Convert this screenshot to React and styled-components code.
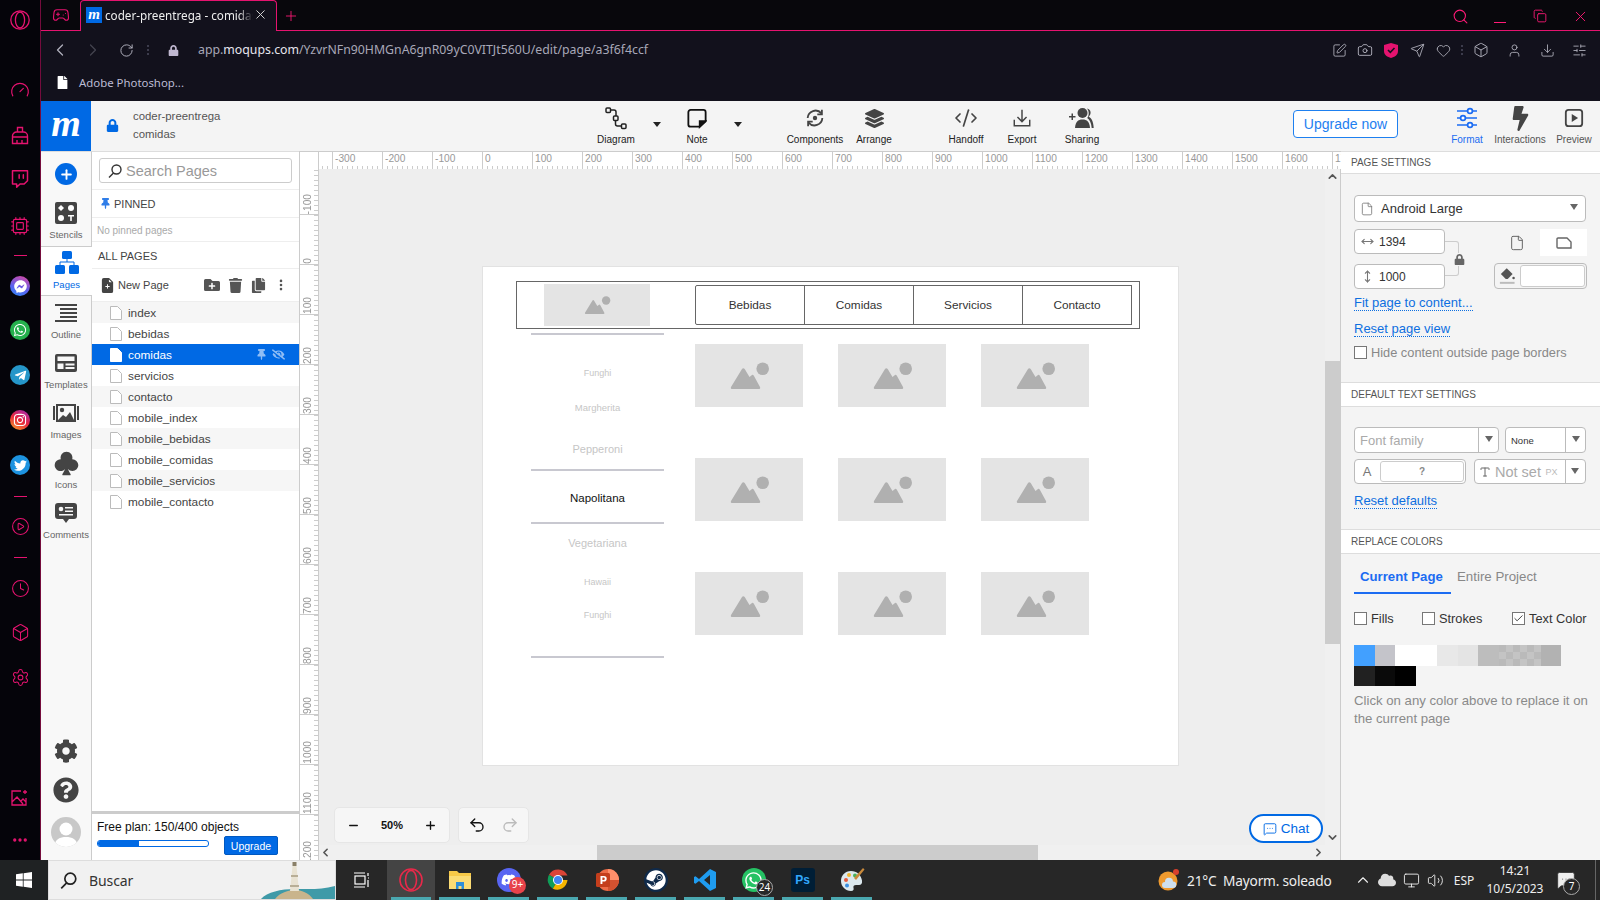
import React from "react";
import styled, { createGlobalStyle } from "styled-components";
import {
  Gauge, Twitch, Cpu, CirclePlay, Clock, Box, Settings, Ellipsis, Gamepad2, Search, Copy, X, Plus, Minus,
  ChevronLeft, ChevronRight, RotateCw, SquarePen, Camera, Send, Heart, User, Download, SlidersHorizontal, Check,
  ChevronUp, ChevronDown, Undo2, Redo2, Volume2, MessageSquareMore, MoveHorizontal, MoveVertical, File as FileIcon,
  Type, CodeXml, Monitor,
} from "lucide-react";
import {
  FaWhatsapp, FaTelegramPlane, FaInstagram, FaTwitter, FaFacebookMessenger, FaLock, FaLayerGroup, FaBolt,
  FaCog, FaQuestionCircle, FaThumbtack, FaTrash, FaCopy, FaFolderPlus, FaFile, FaEyeSlash, FaDiscord, FaSteam, FaCloud,
} from "react-icons/fa";
import { BsSuitClubFill, BsFileEarmarkPlusFill } from "react-icons/bs";

const Global = createGlobalStyle`
  html, body { margin: 0; padding: 0; width: 1600px; height: 900px; overflow: hidden; background: #05040a; }
  * { box-sizing: border-box; }
  body { font-family: "Liberation Sans", Arial, sans-serif; }
`;

const PINK = "#e5136f";
const BLUE = "#0069e4";

/* ---------- page shell ---------- */
const Screen = styled.div`width: 1600px; height: 900px; display: flex; flex-direction: column; overflow: hidden;`;
const Desktop = styled.div`height: 860px; display: flex;`;
const Main = styled.div`flex: 1; min-width: 0; display: flex; flex-direction: column; border-left: 1px solid ${PINK}80;`;

/* ---------- opera sidebar ---------- */
const OperaBar = styled.div`width: 40px; background: #05040a; display: flex; flex-direction: column; align-items: center; color: ${PINK};`;
const OperaSlot = styled.div`height: 24px; width: 40px; flex: none; margin-top: ${p => p.$mt}px; display: flex; align-items: center; justify-content: center;`;
const OperaDash = styled.span`width: 13px; height: 1px; background: ${PINK};`;
const AppDot = styled.span`width: 20px; height: 20px; border-radius: 50%; color: #fff; display: flex; align-items: center; justify-content: center; background: ${p => p.$bg};`;

const OperaLogo = ({ size = 20, color = PINK }) => (
  <svg width={size} height={size} viewBox="0 0 20 20" fill="none" stroke={color} strokeWidth="1.3">
    <circle cx="10" cy="10" r="9.2" /><ellipse cx="10" cy="10" rx="4.6" ry="8" />
  </svg>
);
const BrushIcon = () => (
  <svg width="20" height="20" viewBox="0 0 20 20" fill="none" stroke={PINK} strokeWidth="1.4">
    <path d="M7.5 7V2.5h5V7M2.500 18.500V11a4 4 0 0 1 4-4h7a4 4 0 0 1 4 4v7.500zM2.500 12h15M7 18.500V15M12 18.500V15" />
  </svg>
);
const PhotoSpark = () => (
  <svg width="20" height="20" viewBox="0 0 20 20" fill="none" stroke={PINK} strokeWidth="1.3">
    <path d="M11 3H2v14h14V10M2 14l5-5 6 7M11 13l2-2 3 3M15 2v4M13 4h4" />
  </svg>
);

const sideItems = [
  { y: 20, el: <OperaLogo /> },
  { y: 90, el: <Gauge size={20} strokeWidth={1.4} /> },
  { y: 135, el: <BrushIcon /> },
  { y: 179, el: <Twitch size={20} strokeWidth={1.8} /> },
  { y: 226, el: <Cpu size={20} strokeWidth={1.4} /> },
  { y: 255, el: <OperaDash /> },
  { y: 286, el: <AppDot $bg="linear-gradient(200deg,#e0479f,#5a60f0 60%,#2f8cf5)"><FaFacebookMessenger size={13} /></AppDot> },
  { y: 330, el: <AppDot $bg="#25b04d"><FaWhatsapp size={14} /></AppDot> },
  { y: 375, el: <AppDot $bg="#2596c9"><FaTelegramPlane size={13} /></AppDot> },
  { y: 420, el: <AppDot $bg="linear-gradient(30deg,#f9a825,#e8263f 50%,#9b2bc2)"><FaInstagram size={14} /></AppDot> },
  { y: 465, el: <AppDot $bg="#1d93e0"><FaTwitter size={13} /></AppDot> },
  { y: 496, el: <OperaDash /> },
  { y: 526, el: <CirclePlay size={19} strokeWidth={1.3} /> },
  { y: 557, el: <OperaDash /> },
  { y: 588, el: <Clock size={19} strokeWidth={1.3} /> },
  { y: 632, el: <Box size={19} strokeWidth={1.3} /> },
  { y: 677, el: <Settings size={19} strokeWidth={1.3} /> },
  { y: 798, el: <PhotoSpark /> },
  { y: 840, el: <Ellipsis size={18} strokeWidth={2.4} /> },
];

/* ---------- browser chrome ---------- */
const TabBar = styled.div`height: 31px; flex: none; background: #08070c; display: flex; align-items: flex-end; border-bottom: 1px solid ${PINK}; position: relative; color: #ff1a77;`;
const TabSide = styled.div`width: 39px; height: 30px; display: flex; align-items: center; justify-content: center; color: ${PINK};`;
const ActiveTab = styled.div`width: 197px; height: 31px; margin-bottom: -1px; background: #12111c; border: 1px solid ${PINK}; border-bottom: none; border-radius: 4px 4px 0 0; display: flex; align-items: center; padding: 0 8px 3px 5px; color: #eee;`;
const Favicon = styled.span`width: 16px; height: 16px; background: ${BLUE}; color: #fff; font: italic bold 15px/14px "Liberation Serif", serif; text-align: center; flex: none;`;
const TabTitle = styled.span`font: 11.7px/16px "Noto Sans", sans-serif; margin-left: 3px; width: 148px; white-space: nowrap; overflow: hidden; mask-image: linear-gradient(90deg, #000 90%, transparent);`;
const TabClose = styled.span`margin-left: auto; display: flex; color: #ddd;`;
const NewTab = styled.span`margin-left: 6px; height: 28px; display: flex; align-items: center;`;
const WinControls = styled.div`margin-left: auto; display: flex; height: 28px;`;
const WinBtn = styled.span`width: 40px; display: flex; align-items: center; justify-content: center;`;
const MinLine = styled.span`width: 12px; height: 1px; background: #ff1a77; margin-top: 12px;`;

const AddressBar = styled.div`height: 35px; flex: none; background: #12111c; display: flex; align-items: center; padding-top: 3px; color: #b0b0bc;`;
const NavBtn = styled.span`width: ${p => p.$w}px; display: flex; align-items: center; justify-content: center; color: ${p => p.$c || "inherit"}; flex: none;`;
const Url = styled.div`font: 12.3px/18px "Noto Sans", sans-serif; color: #a8a8b8; margin-left: 3px; white-space: nowrap;`;
const UrlHost = styled.span`color: #e6e6ee;`;
const AddressTools = styled.div`margin-left: auto; display: flex; align-items: center; padding-right: 2px;`;
const Dots = styled.span`width: 2px; height: 10px; border-left: 2px dotted #3c3c4c;`;
const BookmarkBar = styled.div`height: 35px; flex: none; background: #12111c; display: flex; align-items: center; padding: 0 0 2px 15px; color: #fff; gap: 10px;`;
const BookmarkLabel = styled.span`font: 11.4px "Noto Sans", sans-serif; color: #bcbcd4;`;

/* ---------- app header ---------- */
const AppShell = styled.div`flex: 1; min-height: 0; display: flex; flex-direction: column; background: #f4f4f4;`;
const Header = styled.header`height: 50px; flex: none; display: flex; background: #f4f4f4;`;
const Logo = styled.div`width: 50px; background: ${BLUE}; color: #fff; font: italic bold 38px/44px "Liberation Serif", serif; text-align: center; flex: none;`;
const Project = styled.div`width: 500px; flex: none; display: flex; align-items: center; padding: 0 0 2px 15px; gap: 14px; color: ${BLUE};`;
const ProjectText = styled.div`font-size: 11.4px; line-height: 18px; color: #555;`;
const ToolButton = styled.div`width: ${p => p.$w}px; margin-left: ${p => p.$ml || 0}px; flex: none; display: flex; flex-direction: column; align-items: center; padding-top: 4px; color: ${p => p.$active ? "#1b6cf2" : "#333"};`;
const ToolIcon = styled.div`height: 26px; display: flex; align-items: center; justify-content: center; color: ${p => p.$active ? "#1b6cf2" : "#333"};`;
const ToolLabel = styled.div`font-size: 10px; line-height: 12px; margin-top: 3px; white-space: nowrap; color: ${p => p.$active ? "#1b6cf2" : p.$muted ? "#555" : "#222"};`;
const ToolCaret = styled.div`width: 16px; height: 5px; margin: 21px 0 0 ${p => p.$ml}px; flex: none; display: flex; justify-content: center;
  &::after { content: ""; border: 4px solid transparent; border-top: 5px solid #222; border-bottom: none; }`;
const UpgradeNow = styled.button`width: 105px; height: 28px; margin: 9px 0 0 186px; flex: none; border: 1px solid #1e80f0; border-radius: 4px; background: #fff; color: #1e80f0; font: 14px "Liberation Sans", sans-serif; padding: 0;`;

const DiagramIcon = () => (
  <svg width="22" height="24" viewBox="0 0 22 24" fill="none" stroke="#222" strokeWidth="1.5">
    <rect x="1" y="2" width="4.500" height="4.500" rx="1" /><rect x="8.500" y="10" width="4.500" height="4.500" rx="1" /><rect x="16.500" y="18" width="4.500" height="4.500" rx="1" />
    <path d="M5.500 4H9q2 0 2 2v4M10.500 14.500V18q0 2 2 2h4" />
  </svg>
);
const NoteIcon = () => (
  <svg width="20" height="21" viewBox="0 0 22 22" fill="none" stroke="#111" strokeWidth="2">
    <path d="M14 20H4a2.500 2.500 0 0 1-2.500-2.500V4A2.500 2.500 0 0 1 4 1.500h14A2.500 2.500 0 0 1 20.500 4v10z" />
    <path d="M20 14h-6v6z" fill="#111" />
  </svg>
);
const ComponentsIcon = () => (
  <svg width="22" height="22" viewBox="0 0 24 24" fill="none" stroke="#444" strokeWidth="2">
    <path d="M4 12a8.500 8.500 0 0 1 15-5M20 12a8.500 8.500 0 0 1-15 5" /><path d="M19.500 3v5h-5M4.500 21v-5h5" />
    <circle cx="12" cy="12" r="2.400" fill="#444" stroke="none" />
  </svg>
);
const ExportIcon = () => (
  <svg width="20" height="20" viewBox="0 0 22 22" fill="none" stroke="#444" strokeWidth="1.6">
    <path d="M11 2v13M6 10l5 5 5-5M2.500 13v6.500h17V13" />
  </svg>
);
const SharingIcon = () => (
  <svg width="26" height="22" viewBox="0 0 26 22" fill="#444">
    <path d="M0 9h2.500V6.500H4V9h2.500v1.500H4V13H2.500v-2.500H0z" />
    <circle cx="13.500" cy="6" r="5" /><path d="M6 21c.3-6 3-8.500 7.500-8.500S20.700 15 21 21z" />
    <path d="M18 1.500c3 .7 4 2.800 3.500 5-.2 1.300-1 2.500-2 3.300 3 1.200 4.800 4.500 5.200 11.200h-2c-.5-5-2-8.500-4.500-10 1-1.200 1.600-3 1.500-5 0-1.700-.7-3.300-1.700-4.500z" />
  </svg>
);
const FormatIcon = () => (
  <svg width="22" height="22" viewBox="0 0 22 22" fill="none" stroke="#1b6cf2" strokeWidth="1.7">
    <path d="M1 4h20M1 11h20M1 18h20" />
    <circle cx="14" cy="4" r="2.400" fill="#fff" /><circle cx="7" cy="11" r="2.400" fill="#fff" /><circle cx="14" cy="18" r="2.400" fill="#fff" />
  </svg>
);
const PreviewIcon = () => (
  <svg width="20" height="20" viewBox="0 0 22 22" fill="none" stroke="#444" strokeWidth="2">
    <rect x="2" y="2" width="18" height="18" rx="3" /><path d="M8.500 6.500l7 4.500-7 4.500z" fill="#444" stroke="none" />
  </svg>
);

/* ---------- workspace ---------- */
const Workspace = styled.div`flex: 1; min-height: 0; display: flex;`;
const Rail = styled.nav`width: 51px; flex: none; background: #f8f8f8; border-right: 1px solid #ccc; display: flex; flex-direction: column; border-top: 1px solid #ddd;`;
const RailTop = styled.div`height: 44px; flex: none; display: flex; align-items: center; justify-content: center;`;
const AddCircle = styled.span`width: 22px; height: 22px; border-radius: 50%; background: ${BLUE}; color: #fff; display: flex; align-items: center; justify-content: center;`;
const RailItem = styled.div`height: 50px; flex: none; width: 50px; display: flex; flex-direction: column; align-items: center; padding-top: 4px;
  background: ${p => p.$active ? "#fff" : "transparent"};
  ${p => p.$active ? "box-shadow: inset 0 1px 0 #ccc, inset 0 -1px 0 #ccc; margin-right: -1px; width: 51px;" : ""}
  color: ${p => p.$active ? BLUE : "#444"};`;
const RailIcon = styled.div`height: 26px; display: flex; align-items: center; justify-content: center;`;
const RailLabel = styled.div`font-size: 9.5px; line-height: 12px; margin-top: 3px; color: ${p => p.$active ? BLUE : "#666"};`;
const RailBottom = styled.div`margin-top: auto; display: flex; flex-direction: column; align-items: center; padding-bottom: 13px; color: #444; gap: 14px;`;
const Avatar = styled.span`width: 30px; height: 30px; border-radius: 50%; background: #c8c8c8; overflow: hidden; display: flex;`;

const StencilsIcon = () => (
  <svg width="22" height="22" viewBox="0 0 22 22"><rect width="22" height="22" rx="2" fill="#444" />
    <path d="M6 3l3 3-3 3-3-3z" fill="#fff" /><circle cx="16" cy="6" r="3" fill="#fff" /><circle cx="6" cy="16" r="3" fill="#fff" />
    <path d="M13 13h6v1.500h-2.200V19h-1.600v-4.500H13z" fill="#fff" /></svg>
);
const PagesIcon = () => (
  <svg width="24" height="24" viewBox="0 0 24 24" fill={BLUE}>
    <rect x="7" y="0" width="10" height="8" rx="1.500" /><rect x="0" y="14" width="10" height="9" rx="1.500" /><rect x="14" y="14" width="10" height="9" rx="1.500" />
    <path d="M12 8v3M5 14v-3h14v3" fill="none" stroke={BLUE} strokeWidth="1" />
  </svg>
);
const OutlineIcon = () => (
  <svg width="22" height="18" viewBox="0 0 22 18" fill="#444">
    <rect x="0" y="0" width="22" height="2" /><rect x="5" y="4" width="17" height="2" /><rect x="5" y="8" width="17" height="2" /><rect x="5" y="12" width="17" height="2" /><rect x="0" y="16" width="22" height="2" />
  </svg>
);
const TemplatesIcon = () => (
  <svg width="22" height="18" viewBox="0 0 22 18"><rect width="22" height="18" rx="2" fill="#444" />
    <rect x="2.500" y="2.500" width="17" height="4.500" fill="#f8f8f8" /><rect x="2.500" y="9.500" width="6" height="5.500" fill="#f8f8f8" /><rect x="10.500" y="9.500" width="9" height="2" fill="#f8f8f8" /><rect x="10.500" y="13" width="9" height="2" fill="#f8f8f8" /></svg>
);
const ImagesIcon = () => (
  <svg width="26" height="18" viewBox="0 0 26 18"><rect x="3" y="0" width="20" height="18" fill="#444" /><rect x="0" y="2" width="2" height="14" fill="#444" /><rect x="24" y="2" width="2" height="14" fill="#444" />
    <rect x="5" y="2" width="16" height="14" fill="#f8f8f8" /><circle cx="9" cy="6" r="2.200" fill="#444" /><path d="M5 16l5-5 3 2 4-5 4 8z" fill="#444" /></svg>
);
const CommentsIcon = () => (
  <svg width="22" height="20" viewBox="0 0 22 20"><path d="M3 0h16a3 3 0 0 1 3 3v10a3 3 0 0 1-3 3h-5l-3 4-3-4H3a3 3 0 0 1-3-3V3a3 3 0 0 1 3-3z" fill="#444" />
    <circle cx="6" cy="6" r="2.300" fill="#f8f8f8" /><path d="M10 4h8v1.500h-8zM10 7.500h8V9h-8zM4 11h14v1.500H4z" fill="#f8f8f8" /></svg>
);

/* pages panel */
const PagesPanel = styled.aside`width: 207px; flex: none; background: #fff; display: flex; flex-direction: column; border-top: 1px solid #ddd;`;
const SearchWrap = styled.div`height: 38px; flex: none; padding: 6px 7px 7px; border-bottom: 1px solid #eee;`;
const SearchBox = styled.div`height: 25px; border: 1px solid #ccc; border-radius: 3px; display: flex; align-items: center; gap: 4px; padding-left: 8px; font-size: 14.5px; color: #999;`;
const PanelRow = styled.div`height: ${p => p.$h}px; flex: none; display: flex; align-items: center; padding: ${p => p.$pt || 0}px 0 0 ${p => p.$pl || 2}px; border-bottom: 1px solid #eee; font-size: ${p => p.$fs || 11}px; color: ${p => p.$c || "#444"}; gap: 3px;`;
const NewPageActions = styled.div`margin-left: auto; padding-right: 11px; display: flex; align-items: center; gap: 8px; color: #555;`;
const PageRow = styled.div`height: 21px; flex: none; display: flex; align-items: center; padding-left: 18px; gap: 6px; font-size: 11.8px;
  background: ${p => p.$sel ? BLUE : p.$alt ? "#f6f6f6" : "#fff"}; color: ${p => p.$sel ? "#fff" : "#444"};`;
const RowFlags = styled.span`margin-left: auto; padding-right: 14px; display: flex; gap: 5px; align-items: center; color: #8fbdf5;`;
const PlanBox = styled.div`margin-top: auto; height: 49px; flex: none; border-top: 3px solid #ccc; padding: 5px 5px 0; position: relative; background: #fff;`;
const PlanText = styled.div`font-size: 12px; line-height: 16px; color: #111;`;
const PlanBar = styled.div`position: relative; width: 112px; height: 7px; margin-top: 5px; border: 1px solid ${BLUE}; border-radius: 3px; background: #fff; overflow: hidden;`;
const PlanFill = styled.div`height: 100%; background: ${BLUE};`;
const UpgradeSmall = styled.button`position: absolute; left: 132px; top: 22px; width: 54px; height: 19px; background: ${BLUE}; border: 1px solid #0058c0; border-radius: 2px; color: #fff; font: 10.5px "Liberation Sans", sans-serif; padding: 0;`;

const PageGlyph = ({ sel }) => (
  <svg width="12" height="14" viewBox="0 0 12 14" fill="#fff" stroke={sel ? "#fff" : "#bbb"}>
    <path d="M.5.500h7l4 4v9H.5z" />
  </svg>
);
const Magnifier = ({ size = 14, color = "#333" }) => (
  <svg width={size} height={size} viewBox="0 0 14 14" fill="none" stroke={color} strokeWidth="1.4">
    <circle cx="8.500" cy="5.500" r="4.500" /><path d="M5.500 9L1 13.500" />
  </svg>
);

/* editor */
const Editor = styled.div`width: 1042px; flex: none; display: flex; flex-direction: column; min-width: 0; border-left: 1px solid #ccc;`;
const TopRulerRow = styled.div`height: 18px; flex: none; display: flex; background: #fff; border-top: 1px solid #ccc; overflow: hidden;`;
const RulerCorner = styled.div`width: 19px; flex: none; border-right: 1px solid #ccc;`;
const TopRuler = styled.div`flex: 1; display: flex; overflow: hidden; position: relative;
  background: repeating-linear-gradient(90deg, #ccc 0 1px, transparent 1px 5px) 3px 100% / 100% 3px no-repeat;`;
const RulerLead = styled.div`flex: none; width: ${p => p.$size}px;`;
const TopTick = styled.div`width: 50px; flex: none; border-left: 1px solid #ccc; font-size: 10.2px; line-height: 12px; color: #999; padding: 1px 0 0 2px; overflow: hidden; white-space: nowrap;`;
const EditorBody = styled.div`flex: 1; min-height: 0; display: flex;`;
const LeftRuler = styled.div`width: 19px; flex: none; background: #fff; border-right: 1px solid #ccc; overflow: hidden; display: flex; flex-direction: column;
  background-image: repeating-linear-gradient(180deg, #ccc 0 1px, transparent 1px 5px); background-size: 4px 100%; background-position: 100% 1px; background-repeat: no-repeat;`;
const LeftTick = styled.div`height: 50px; flex: none; border-bottom: 1px solid #ccc; position: relative; &:first-child { margin-top: -4px; }`;
const LeftTickLabel = styled.span`position: absolute; left: 2px; bottom: 0; writing-mode: vertical-rl; transform: rotate(180deg); font-size: 10.2px; line-height: 11px; color: #999; white-space: nowrap;`;
const CanvasColumn = styled.div`flex: 1; min-width: 0; display: flex; flex-direction: column;`;
const Canvas = styled.div`flex: 1; min-height: 0; background: #eee; position: relative; overflow: hidden;`;
const HScroll = styled.div`height: 15px; flex: none; background: #f0f0f0; position: relative; color: #555;`;
const HThumb = styled.div`position: absolute; left: 278px; top: 0; width: 441px; height: 15px; background: #ccc;`;
const ScrollArrow = styled.span`position: absolute; display: flex; color: #555; ${p => p.$pos}`;
const VScroll = styled.div`width: 16px; flex: none; background: #f0f0f0; border-right: 1px solid #ccc; position: relative;`;
const VThumb = styled.div`position: absolute; top: 192px; left: 0; right: 0; height: 283px; background: #ccc;`;

/* wireframe page on the free canvas */
const WirePage = styled.div`position: absolute; left: 163px; top: 97px; width: 697px; height: 500px; background: #fff; border: 1px solid #e2e2e2;`;
const WireNav = styled.div`position: absolute; left: 33px; top: 14px; width: 624px; height: 48px; border: 1px solid #666; display: flex;`;
const WireLogo = styled.div`width: 106px; height: 42px; margin: 2px 0 0 27px; flex: none; background: #e4e4e4;`;
const WireTabs = styled.div`display: flex; margin: 3px 0 0 46px; height: 40px;`;
const WireTab = styled.div`width: 110px; height: 40px; border: 1px solid #666; margin-left: -1px; display: flex; align-items: center; justify-content: center; font-size: 11.8px; color: #333; background: #fff;
  &:first-child { border-radius: 2px 0 0 2px; }`;
const WireMenu = styled.div`position: absolute; left: 48px; top: 66px; width: 133px; display: flex; flex-direction: column;`;
const WireLine = styled.div`height: 2px; margin-top: ${p => p.$mt}px; background: #c8c8d0; flex: none;`;
const WireItem = styled.div`height: 14px; line-height: 14px; margin-top: ${p => p.$mt}px; text-align: center; font-size: ${p => p.$fs}px; color: ${p => p.$on ? "#111" : "#c6c6c6"}; flex: none;`;
const WireGrid = styled.div`position: absolute; left: 212px; top: 77px; display: grid; grid-template-columns: repeat(3, 108px); grid-auto-rows: 63px; column-gap: 35px; row-gap: 51px;`;
const WirePic = styled.div`background: #e4e4e4;`;
const PicSvg = styled.svg`display: block; width: 100%; height: 100%;`;
const PicGlyph = () => (
  <PicSvg viewBox="0 0 108 63" preserveAspectRatio="xMidYMid meet" fill="#b0b0b0">
    <circle cx="67.700" cy="24.700" r="6.300" />
    <path d="M36 43L47 25Q48.300 23.300 49.700 25L54.500 33L57 31Q58 30.400 59 32L65 43Q65.800 45 63.500 45H37.500Q35.200 45 36 43Z" />
  </PicSvg>
);

/* floating */
const FloatBox = styled.div`position: absolute; bottom: 2px; height: 36px; width: ${p => p.$w}px; left: ${p => p.$l}px; background: #f6f6f6; border: 1px solid #e6e6e6; border-radius: 5px; display: flex; align-items: center; justify-content: space-between; padding: 0 ${p => p.$pad}px; color: #111;`;
const ZoomText = styled.span`font-size: 11px; font-weight: 700; color: #111; text-align: center;`;
const ChatButton = styled.div`position: absolute; right: 2px; bottom: 2px; width: 74px; height: 29px; border: 2px solid ${BLUE}; border-radius: 15px; background: #fff; display: flex; align-items: center; justify-content: center; gap: 4px; font-size: 13.5px; color: ${BLUE};`;

/* right panel */
const Props = styled.aside`flex: 1; min-width: 0; background: #f4f4f4; display: flex; flex-direction: column; border-top: 1px solid #ddd;`;
const SectionHead = styled.div`height: ${p => p.$h || 24}px; flex: none; background: #fff; border-bottom: 1px solid #ddd; ${p => p.$top ? "border-top: 1px solid #ddd;" : ""} display: flex; align-items: center; padding-left: 10px; font-size: 10px; color: #555;`;
const SectionBody = styled.div`height: ${p => p.$h}px; flex: none; padding: ${p => p.$pt}px 14px 0 13px;`;
const Field = styled.div`height: ${p => p.$h || 25}px; width: ${p => p.$w ? p.$w + "px" : "100%"}; flex: none; border: 1px solid #bbb; border-radius: 4px; background: #fff; display: flex; align-items: center; font-size: ${p => p.$fs || 12}px; color: ${p => p.$c || "#333"}; position: relative; overflow: hidden;`;
const SelectArrow = styled.span`margin-left: auto; width: ${p => p.$w || 20}px; align-self: stretch; flex: none; display: flex; justify-content: center; padding-top: 8px; ${p => p.$sep ? "border-left: 1px solid #bbb;" : ""}
  &::after { content: ""; height: 0; border: 4px solid transparent; border-top: 6px solid #666; border-bottom: none; }`;
const SizeRow = styled.div`display: flex; margin-top: 7px; height: 60px;`;
const SizeCol = styled.div`display: flex; flex-direction: column; gap: 10px; width: 91px; flex: none;`;
const FieldIcon = styled.span`width: 24px; display: flex; justify-content: center; color: #777; flex: none;`;
const LockZone = styled.div`width: 49px; flex: none; position: relative; color: #666;`;
const LinkBracket = styled.span`position: absolute; left: 0; top: 12px; width: 14px; height: 35px; border: 1px solid #ccc; border-left: none; border-radius: 0 3px 3px 0;`;
const LockBadge = styled.span`position: absolute; left: 9px; top: 24px; display: flex; background: #f4f4f4; padding: 1px 0; color: #666;`;
const OrientCol = styled.div`width: 93px; flex: none; display: flex; flex-direction: column;`;
const OrientRow = styled.div`height: 27px; display: flex; align-items: center; flex: none; color: #666;`;
const OrientBtn = styled.span`width: ${p => p.$w}px; height: 27px; display: flex; align-items: center; justify-content: center; background: ${p => p.$on ? "#fff" : "transparent"}; flex: none;`;
const FillField = styled(Field)`margin-top: 7px; height: 26px; background: #f4f4f4;`;
const FillSwatch = styled.span`margin-left: auto; margin-right: 1px; width: 66px; height: 22px; background: #fff; border: 1px solid #ccc; border-radius: 3px;`;
const PanelLink = styled.div`font-size: 13px; line-height: 14px; margin-top: ${p => p.$mt}px; color: #0e6fe0; width: fit-content; border-bottom: 1px dotted #0e6fe0;`;
const CheckRow = styled.div`display: flex; align-items: center; margin-top: ${p => p.$mt}px; height: 14px; font-size: 12.8px; color: ${p => p.$c};`;
const CheckItem = styled.div`display: flex; align-items: center; gap: 4px; width: ${p => p.$w ? p.$w + "px" : "auto"}; flex: none; white-space: nowrap;`;
const CheckBox = styled.span`width: 13px; height: 13px; border: 1px solid #777; background: #fff; flex: none; display: flex; align-items: center; justify-content: center; color: #333;`;
const TextRow = styled.div`display: flex; gap: ${p => p.$gap}px; margin-top: ${p => p.$mt || 0}px;`;
const FieldText = styled.span`padding-left: ${p => p.$pl}px; white-space: nowrap;`;
const InsetBox = styled.span`flex: 1; align-self: stretch; margin: 1px; border: 1px solid #ccc; border-radius: 3px; display: flex; align-items: center; justify-content: center; font-size: 10px; font-weight: 700; color: #888;`;
const PxTag = styled.span`margin-left: auto; font-size: 9px; color: #bbb; padding-right: 3px;`;
const NotSetIcon = styled.span`width: 20px; display: flex; justify-content: center; color: #666; flex: none;`;
const Tabs = styled.div`display: flex; padding-top: 12px;`;
const TabItem = styled.div`height: 28px; line-height: 21px; ${p => p.$on ? `width: 97px; padding-left: 6px; font-weight: 700; font-size: 13.2px; color: #1b6cf2; border-bottom: 2px solid #1b6cf2;` : "font-size: 13.3px; margin-left: 6px; color: #888;"}`;
const Swatches = styled.div`display: flex; flex-wrap: wrap; margin-top: 20px; width: 232px;`;
const Swatch = styled.span`height: ${p => p.$h || 21}px; width: ${p => p.$w}px; background: ${p => p.$c};`;
const CheckerSwatch = styled(Swatch)`background: conic-gradient(#c4c4c4 25%, #bababa 0 50%, #c4c4c4 0 75%, #bababa 0) 0 0 / 14px 14px;`;
const SwatchBreak = styled.span`width: 100%; height: 0;`;
const HelpText = styled.div`font-size: 13.2px; line-height: 18px; color: #8a8a8a; margin-top: 6px; white-space: nowrap;`;

/* taskbar */
const Taskbar = styled.footer`height: 40px; flex: none; background: #272727; display: flex; color: #eee;`;
const StartBtn = styled.div`width: 48px; flex: none; background: #1f2223; display: flex; align-items: center; justify-content: center;`;
const TaskSearch = styled.div`width: 288px; flex: none; background: #f1f1f1; border: 1px solid #ddd; display: flex; align-items: center; padding-left: 11px; gap: 12px; font: 14px "Noto Sans", sans-serif; letter-spacing: -.1px; color: #333; position: relative; overflow: hidden;`;
const SearchArt = styled.span`position: absolute; right: 0; bottom: 0; display: flex;`;
const TaskIcon = styled.div`width: ${p => p.$w || 49}px; flex: none; display: flex; align-items: center; justify-content: center; position: relative; background: ${p => p.$on ? "#444" : "transparent"};
  ${p => p.$open ? `&::after { content: ""; position: absolute; left: 4px; right: 4px; bottom: 0; height: 3px; background: #4aa8b0; }` : ""}`;
const Badge = styled.span`position: absolute; right: ${p => p.$r}px; bottom: ${p => p.$b}px; min-width: 17px; height: 17px; border-radius: 50%; font: 10px/15px "Noto Sans", sans-serif; text-align: center; color: #fff; background: ${p => p.$bg}; ${p => p.$ring ? "border: 1px solid #aaa;" : ""}`;
const Tile = styled.span`width: 24px; height: 24px; border-radius: ${p => p.$r || 3}px; display: flex; align-items: center; justify-content: center; background: ${p => p.$bg}; color: ${p => p.$c || "#fff"}; font: 700 12px "Liberation Sans", sans-serif;`;
const TrayRight = styled.div`margin-left: auto; display: flex; align-items: stretch;`;
const Weather = styled.div`width: 193px; display: flex; align-items: center; gap: 7px; font: 13.7px "Noto Sans", sans-serif; color: #eee; white-space: nowrap; letter-spacing: -.2px;`;
const WeatherOrb = styled.span`width: 22px; height: 24px; position: relative; display: flex; flex: none;`;
const TrayIcon = styled.div`width: ${p => p.$w || 24}px; display: flex; align-items: center; justify-content: center; color: #eee; font: 12px "Noto Sans", sans-serif; flex: none; position: relative;`;
const ClockBox = styled.div`width: 68px; flex: none; text-align: center; font: 12px/18px "Noto Sans", sans-serif; color: #eee; padding-top: 2px; white-space: nowrap;`;
const DesktopEdge = styled.div`width: 17px; flex: none; position: relative; &::after { content: ""; position: absolute; left: 12px; top: 0; bottom: 0; width: 1px; background: #666; }`;

const WinLogo = () => (
  <svg width="16" height="16" viewBox="0 0 16 16" fill="#fff"><path d="M0 2.200L6.800 1.300V7.600H0zM7.600 1.200L16 0V7.600H7.600zM0 8.400H6.800V14.700L0 13.800zM7.600 8.400H16V16L7.600 14.800z" /></svg>
);
const Lighthouse = () => (
  <svg width="82" height="40" viewBox="0 0 82 40">
    <path d="M8 40C14 33 28 30 42 30S68 31 82 27V40Z" fill="#3f9aa8" />
    <path d="M22 40C26 34 36 31 42 31S56 34 60 40Z" fill="#c9b48c" />
    <path d="M37 32L39.500 7H43.500L46 32Z" fill="#e8e2d2" /><rect x="39.500" y="3" width="4" height="4" fill="#8a8068" /><rect x="38" y="16" width="7" height="2" fill="#b8ae96" /><rect x="37" y="26" width="9" height="2" fill="#b8ae96" />
  </svg>
);
const FolderTile = () => (
  <svg width="24" height="22" viewBox="0 0 24 22"><path d="M1 2h8l2 2h12v16H1z" fill="#f7c948" /><path d="M1 7h22v13H1z" fill="#fbdc74" /><path d="M8 13h8v7h-2.500v-3h-3v3H8z" fill="#2e8fd8" /></svg>
);
const ChromeTile = () => (
  <svg width="24" height="24" viewBox="0 0 24 24">
    <path d="M12 12L3 6.800A10.500 10.500 0 0 1 21.500 7.500H12z" fill="#db4437" />
    <path d="M12 12L6.800 20.800A10.500 10.500 0 0 1 3 6.800z" fill="#0f9d58" />
    <path d="M12 12h9.500A10.500 10.500 0 0 1 6.800 20.800z" fill="#f4b400" />
    <circle cx="12" cy="12" r="5" fill="#fff" /><circle cx="12" cy="12" r="4" fill="#4285f4" />
  </svg>
);
const PptTile = () => (
  <svg width="24" height="24" viewBox="0 0 24 24"><circle cx="13" cy="12" r="11" fill="#ed6c47" /><path d="M13 1a11 11 0 0 1 11 11H13z" fill="#ff8f6b" /><path d="M13 12h11a11 11 0 0 1-11 11z" fill="#d35230" /><rect x="1" y="5" width="14" height="14" rx="1.500" fill="#c43e1c" /><path d="M5.500 8h3.400a2.600 2.600 0 0 1 0 5.600H7.400V16H5.500zM7.400 9.600v2.400h1.200a1.200 1.200 0 0 0 0-2.400z" fill="#fff" /></svg>
);
const CodeTile = () => (
  <svg width="24" height="24" viewBox="0 0 24 24"><path d="M17 1l6 3v16l-6 3L6 13l-3.500 2.700L1 15V9l1.500-.7L6 11zM17 7l-6 5 6 5z" fill="#1f9cf0" fillRule="evenodd" /></svg>
);
const PaletteTile = () => (
  <svg width="26" height="26" viewBox="0 0 26 26"><path d="M12 4C6 4 2 8.500 2 14s4.500 10 10 10c2.500 0 3-1.500 2.500-3-.5-2 .5-3 2.500-3h3c2 0 3.500-1.500 3-4.500C22 8 18 4 12 4z" fill="#dce8ee" />
    <circle cx="7" cy="13" r="2" fill="#e8593c" /><circle cx="10" cy="8" r="2" fill="#f2b632" /><circle cx="16" cy="8.500" r="2" fill="#48b05c" /><circle cx="8" cy="18.500" r="2" fill="#3b8fe0" /><path d="M24 1l1.500 1.500L17 13l-2-2z" fill="#c98a3c" /></svg>
);

const topLabels = []; for (let v = -300; v <= 1700; v += 100) topLabels.push(v);
const leftLabels = []; for (let v = -100; v <= 1200; v += 100) leftLabels.push(v);
const pages = ["index", "bebidas", "comidas", "servicios", "contacto", "mobile_index", "mobile_bebidas", "mobile_comidas", "mobile_servicios", "mobile_contacto"];
const sw = [["#42a0ff", 21], ["#c4c4ca", 20], ["#fff", 42], ["#e8e8e8", 21], ["#e4e4e4", 20], ["#bdbdbd", 21]];

export default function App() {
  let prev = 0;
  return (
    <Screen>
      <Global />
      <Desktop>
        <OperaBar>
          {sideItems.map((it, i) => {
            const mt = i === 0 ? 8 : it.y - prev - 24;
            prev = it.y;
            return <OperaSlot key={i} $mt={mt}>{it.el}</OperaSlot>;
          })}
        </OperaBar>
        <Main>
          <TabBar>
            <TabSide><Gamepad2 size={18} strokeWidth={1.5} /></TabSide>
            <ActiveTab>
              <Favicon>m</Favicon>
              <TabTitle>coder-preentrega - comidas</TabTitle>
              <TabClose><X size={15} strokeWidth={1.5} /></TabClose>
            </ActiveTab>
            <NewTab><Plus size={16} strokeWidth={1.3} /></NewTab>
            <WinControls>
              <WinBtn><Search size={17} strokeWidth={1.5} /></WinBtn>
              <WinBtn><MinLine /></WinBtn>
              <WinBtn><Copy size={14} strokeWidth={1.5} /></WinBtn>
              <WinBtn><X size={17} strokeWidth={1.3} /></WinBtn>
            </WinControls>
          </TabBar>
          <AddressBar>
            <NavBtn $w={37}><ChevronLeft size={20} strokeWidth={1.5} /></NavBtn>
            <NavBtn $w={29} $c="#44444f"><ChevronRight size={20} strokeWidth={1.5} /></NavBtn>
            <NavBtn $w={38}><RotateCw size={15} strokeWidth={1.6} /></NavBtn>
            <NavBtn $w={6}><Dots /></NavBtn>
            <NavBtn $w={44} $c="#c0b8d0"><FaLock size={11} /></NavBtn>
            <Url>app.<UrlHost>moqups.com</UrlHost>/YzvrNFn90HMGnA6gnR09yC0VITJt560U/edit/page/a3f6f4ccf</Url>
            <AddressTools>
              <NavBtn $w={26}><SquarePen size={15} strokeWidth={1.4} /></NavBtn>
              <NavBtn $w={26}><Camera size={16} strokeWidth={1.4} /></NavBtn>
              <NavBtn $w={26} $c={PINK}><svg width="14" height="15" viewBox="0 0 14 15"><path d="M7 0l7 2v6c0 4-3.500 6-7 7-3.500-1-7-3-7-7V2z" fill={PINK} /><path d="M4 7l2.300 2.300L10.500 5" stroke="#12111c" strokeWidth="1.6" fill="none" /></svg></NavBtn>
              <NavBtn $w={26}><Send size={15} strokeWidth={1.4} /></NavBtn>
              <NavBtn $w={26}><Heart size={15} strokeWidth={1.4} /></NavBtn>
              <NavBtn $w={12}><Dots /></NavBtn>
              <NavBtn $w={26}><Box size={16} strokeWidth={1.4} /></NavBtn>
              <NavBtn $w={40}><User size={15} strokeWidth={1.4} /></NavBtn>
              <NavBtn $w={26}><Download size={15} strokeWidth={1.4} /></NavBtn>
              <NavBtn $w={38}><SlidersHorizontal size={15} strokeWidth={1.4} /></NavBtn>
            </AddressTools>
          </AddressBar>
          <BookmarkBar><FaFile size={13} /><BookmarkLabel>Adobe Photoshop...</BookmarkLabel></BookmarkBar>

          <AppShell>
            <Header>
              <Logo>m</Logo>
              <Project>
                <FaLock size={13} />
                <ProjectText>coder-preentrega<br />comidas</ProjectText>
              </Project>
              <ToolButton $w={50}><ToolIcon><DiagramIcon /></ToolIcon><ToolLabel>Diagram</ToolLabel></ToolButton>
              <ToolCaret $ml={8} />
              <ToolButton $w={40} $ml={12}><ToolIcon><NoteIcon /></ToolIcon><ToolLabel>Note</ToolLabel></ToolButton>
              <ToolCaret $ml={13} />
              <ToolButton $w={66} $ml={36}><ToolIcon><ComponentsIcon /></ToolIcon><ToolLabel>Components</ToolLabel></ToolButton>
              <ToolButton $w={50} $ml={1}><ToolIcon><FaLayerGroup size={19} color="#444" /></ToolIcon><ToolLabel>Arrange</ToolLabel></ToolButton>
              <ToolButton $w={50} $ml={42}><ToolIcon><CodeXml size={24} strokeWidth={1.7} color="#444" /></ToolIcon><ToolLabel>Handoff</ToolLabel></ToolButton>
              <ToolButton $w={44} $ml={9}><ToolIcon><ExportIcon /></ToolIcon><ToolLabel>Export</ToolLabel></ToolButton>
              <ToolButton $w={50} $ml={13}><ToolIcon><SharingIcon /></ToolIcon><ToolLabel>Sharing</ToolLabel></ToolButton>
              <UpgradeNow>Upgrade now</UpgradeNow>
              <ToolButton $w={44} $ml={47} $active><ToolIcon $active><FormatIcon /></ToolIcon><ToolLabel $active>Format</ToolLabel></ToolButton>
              <ToolButton $w={62}><ToolIcon><FaBolt size={25} color="#444" /></ToolIcon><ToolLabel $muted>Interactions</ToolLabel></ToolButton>
              <ToolButton $w={46}><ToolIcon><PreviewIcon /></ToolIcon><ToolLabel $muted>Preview</ToolLabel></ToolButton>
            </Header>

            <Workspace>
              <Rail>
                <RailTop><AddCircle><Plus size={15} strokeWidth={3} /></AddCircle></RailTop>
                <RailItem><RailIcon><StencilsIcon /></RailIcon><RailLabel>Stencils</RailLabel></RailItem>
                <RailItem $active><RailIcon><PagesIcon /></RailIcon><RailLabel $active>Pages</RailLabel></RailItem>
                <RailItem><RailIcon><OutlineIcon /></RailIcon><RailLabel>Outline</RailLabel></RailItem>
                <RailItem><RailIcon><TemplatesIcon /></RailIcon><RailLabel>Templates</RailLabel></RailItem>
                <RailItem><RailIcon><ImagesIcon /></RailIcon><RailLabel>Images</RailLabel></RailItem>
                <RailItem><RailIcon><BsSuitClubFill size={27} /></RailIcon><RailLabel>Icons</RailLabel></RailItem>
                <RailItem><RailIcon><CommentsIcon /></RailIcon><RailLabel>Comments</RailLabel></RailItem>
                <RailBottom>
                  <FaCog size={24} />
                  <FaQuestionCircle size={26} />
                  <Avatar>
                    <svg width="30" height="30" viewBox="0 0 30 30" fill="#fff"><circle cx="15" cy="12" r="6.500" /><path d="M3 30c1-8 6-10 12-10s11 2 12 10z" /></svg>
                  </Avatar>
                </RailBottom>
              </Rail>

              <PagesPanel>
                <SearchWrap><SearchBox><Magnifier />Search Pages</SearchBox></SearchWrap>
                <PanelRow $h={28} $pl={8}><FaThumbtack size={11} color="#2f7de8" />PINNED</PanelRow>
                <PanelRow $h={24} $pl={5} $pt={2} $fs={10} $c="#aaa">No pinned pages</PanelRow>
                <PanelRow $h={27} $pl={6} $pt={2}>ALL PAGES</PanelRow>
                <PanelRow $h={33} $pl={8} $fs={11}>
                  <BsFileEarmarkPlusFill size={15} color="#444" />New Page
                  <NewPageActions><FaFolderPlus size={16} /><FaTrash size={15} /><FaCopy size={15} /><Ellipsis size={14} strokeWidth={2.5} transform="rotate(90)" /></NewPageActions>
                </PanelRow>
                {pages.map((p, i) => (
                  <PageRow key={p} $sel={p === "comidas"} $alt={i % 2 === 0}>
                    <PageGlyph sel={p === "comidas"} />{p}
                    {p === "comidas" && <RowFlags><FaThumbtack size={11} /><FaEyeSlash size={13} /></RowFlags>}
                  </PageRow>
                ))}
                <PlanBox>
                  <PlanText>Free plan: 150/400 objects</PlanText>
                  <PlanBar><PlanFill style={{ width: `${(150 / 400) * 100}%` }} /></PlanBar>
                  <UpgradeSmall>Upgrade</UpgradeSmall>
                </PlanBox>
              </PagesPanel>

              <Editor>
                <TopRulerRow>
                  <RulerCorner />
                  <TopRuler>
                    <RulerLead $size={13} />
                    {topLabels.map(v => <TopTick key={v}>{v}</TopTick>)}
                  </TopRuler>
                </TopRulerRow>
                <EditorBody>
                  <LeftRuler>
                    {leftLabels.map(v => <LeftTick key={v}><LeftTickLabel>{v}</LeftTickLabel></LeftTick>)}
                  </LeftRuler>
                  <CanvasColumn>
                    <Canvas>
                      <WirePage>
                        <WireNav>
                          <WireLogo><PicGlyph /></WireLogo>
                          <WireTabs>
                            {["Bebidas", "Comidas", "Servicios", "Contacto"].map(t => <WireTab key={t}>{t}</WireTab>)}
                          </WireTabs>
                        </WireNav>
                        <WireMenu>
                          <WireLine $mt={0} />
                          <WireItem $mt={31} $fs={9}>Funghi</WireItem>
                          <WireItem $mt={21} $fs={9.5}>Margherita</WireItem>
                          <WireItem $mt={27} $fs={11}>Pepperoni</WireItem>
                          <WireLine $mt={13} />
                          <WireItem $mt={19.5} $fs={11.5} $on>Napolitana</WireItem>
                          <WireLine $mt={17.5} />
                          <WireItem $mt={12} $fs={11}>Vegetariana</WireItem>
                          <WireItem $mt={25} $fs={9}>Hawaii</WireItem>
                          <WireItem $mt={19} $fs={9}>Funghi</WireItem>
                          <WireLine $mt={34} />
                        </WireMenu>
                        <WireGrid>
                          {Array.from({ length: 9 }, (_, i) => <WirePic key={i}><PicGlyph /></WirePic>)}
                        </WireGrid>
                      </WirePage>
                      <FloatBox $l={15} $w={116} $pad={12}>
                        <Minus size={13} strokeWidth={2.5} /><ZoomText>50%</ZoomText><Plus size={13} strokeWidth={2.5} />
                      </FloatBox>
                      <FloatBox $l={139} $w={71} $pad={9}>
                        <Undo2 size={18} strokeWidth={1.8} /><Redo2 size={18} strokeWidth={1.8} color="#bbb" />
                      </FloatBox>
                      <ChatButton><MessageSquareMore size={14} strokeWidth={1.6} />Chat</ChatButton>
                    </Canvas>
                    <HScroll>
                      <HThumb />
                      <ScrollArrow $pos="left: 0; top: 1px;"><ChevronLeft size={13} strokeWidth={3} /></ScrollArrow>
                      <ScrollArrow $pos="right: 0; top: 1px;"><ChevronRight size={13} strokeWidth={3} /></ScrollArrow>
                    </HScroll>
                  </CanvasColumn>
                  <VScroll>
                    <VThumb />
                    <ScrollArrow $pos="left: 1px; top: 1px;"><ChevronUp size={13} strokeWidth={3} /></ScrollArrow>
                    <ScrollArrow $pos="left: 1px; bottom: 16px;"><ChevronDown size={13} strokeWidth={3} /></ScrollArrow>
                  </VScroll>
                </EditorBody>
              </Editor>

              <Props>
                <SectionHead $h={22}>PAGE SETTINGS</SectionHead>
                <SectionBody $h={208} $pt={21}>
                  <Field $h={27} $fs={13}>
                    <FieldIcon><FileIcon size={14} strokeWidth={1.4} /></FieldIcon><FieldText $pl={2}>Android Large</FieldText>
                    <SelectArrow $w={22} />
                  </Field>
                  <SizeRow>
                    <SizeCol>
                      <Field><FieldIcon><MoveHorizontal size={13} /></FieldIcon>1394</Field>
                      <Field><FieldIcon><MoveVertical size={13} /></FieldIcon>1000</Field>
                    </SizeCol>
                    <LockZone><LinkBracket /><LockBadge><FaLock size={11} /></LockBadge></LockZone>
                    <OrientCol>
                      <OrientRow>
                        <OrientBtn $w={46}><FileIcon size={16} strokeWidth={1.5} /></OrientBtn>
                        <OrientBtn $w={47} $on><svg width="16" height="12" viewBox="0 0 16 12" fill="none" stroke="#666" strokeWidth="1.4"><path d="M2 1h9l4 4v6H2a1 1 0 0 1-1-1V2a1 1 0 0 1 1-1z" /></svg></OrientBtn>
                      </OrientRow>
                      <FillField>
                        <svg width="26" height="20" viewBox="0 0 26 20" fill="#555"><path d="M12 2l6 6-5 5H11L6 8z" /><circle cx="19" cy="12" r="1.300" /><rect x="5" y="16" width="15" height="2" fill="#bbb" /></svg>
                        <FillSwatch />
                      </FillField>
                    </OrientCol>
                  </SizeRow>
                  <PanelLink $mt={7}>Fit page to content...</PanelLink>
                  <PanelLink $mt={11}>Reset page view</PanelLink>
                  <CheckRow $mt={8} $c="#888"><CheckItem><CheckBox />Hide content outside page borders</CheckItem></CheckRow>
                </SectionBody>
                <SectionHead $top $h={25}>DEFAULT TEXT SETTINGS</SectionHead>
                <SectionBody $h={122} $pt={20}>
                  <TextRow $gap={6}>
                    <Field $w={145} $h={26} $fs={13} $c="#aaa"><FieldText $pl={5}>Font family</FieldText><SelectArrow $sep /></Field>
                    <Field $w={81} $h={26} $fs={9.5}><FieldText $pl={5}>None</FieldText><SelectArrow $sep /></Field>
                  </TextRow>
                  <TextRow $gap={8} $mt={6}>
                    <Field $w={112} $fs={13} $c="#777"><FieldIcon>A</FieldIcon><InsetBox>?</InsetBox></Field>
                    <Field $w={112} $fs={14.5} $c="#aaa"><NotSetIcon><Type size={12} strokeWidth={2} /></NotSetIcon>Not set<PxTag>PX</PxTag><SelectArrow $sep $w={20} /></Field>
                  </TextRow>
                  <PanelLink $mt={10}>Reset defaults</PanelLink>
                </SectionBody>
                <SectionHead $top $h={25}>REPLACE COLORS</SectionHead>
                <SectionBody $h={300} $pt={0}>
                  <Tabs><TabItem $on>Current Page</TabItem><TabItem>Entire Project</TabItem></Tabs>
                  <CheckRow $mt={17} $c="#333">
                    <CheckItem $w={68}><CheckBox />Fills</CheckItem>
                    <CheckItem $w={90}><CheckBox />Strokes</CheckItem>
                    <CheckItem><CheckBox><Check size={11} strokeWidth={2} /></CheckBox>Text Color</CheckItem>
                  </CheckRow>
                  <Swatches>
                    {sw.map(([c, w], i) => <Swatch key={i} $c={c} $w={w} />)}
                    <CheckerSwatch $w={42} />
                    <Swatch $c="#b2b2b2" $w={20} />
                    <SwatchBreak />
                    <Swatch $c="#212121" $w={21} $h={20} />
                    <Swatch $c="#0a0a0a" $w={20} $h={20} />
                    <Swatch $c="#000" $w={21} $h={20} />
                  </Swatches>
                  <HelpText>Click on any color above to replace it on<br />the current page</HelpText>
                </SectionBody>
              </Props>
            </Workspace>
          </AppShell>
        </Main>
      </Desktop>

      <Taskbar>
        <StartBtn><WinLogo /></StartBtn>
        <TaskSearch><Magnifier size={17} color="#222" />Buscar<SearchArt><Lighthouse /></SearchArt></TaskSearch>
        <TaskIcon $w={51}><svg width="16" height="16" viewBox="0 0 16 16" fill="none" stroke="#fff" strokeWidth="1.2"><rect x="1" y="4" width="10" height="8" /><path d="M0 1h11M0 15h11M14 1v3M14 6h1M14 8v7" /></svg></TaskIcon>
        <TaskIcon $w={48} $on $open><OperaLogo size={24} color="#e8294a" /></TaskIcon>
        <TaskIcon $open><FolderTile /></TaskIcon>
        <TaskIcon $open><Tile $r={12} $bg="#5865f2"><FaDiscord size={16} /></Tile><Badge $r={7} $b={6} $bg="#e8434a">9+</Badge></TaskIcon>
        <TaskIcon $open><ChromeTile /></TaskIcon>
        <TaskIcon $open><PptTile /></TaskIcon>
        <TaskIcon $open><Tile $r={12} $bg="#0f2a4a"><FaSteam size={20} /></Tile></TaskIcon>
        <TaskIcon $open><CodeTile /></TaskIcon>
        <TaskIcon $open><Tile $r={12} $bg="#25c264"><FaWhatsapp size={19} /></Tile><Badge $r={5} $b={4} $bg="#272727" $ring>24</Badge></TaskIcon>
        <TaskIcon $open><Tile $bg="#001e36" $c="#31a8ff">Ps</Tile></TaskIcon>
        <TaskIcon $open><PaletteTile /></TaskIcon>
        <TrayRight>
          <Weather>
            <WeatherOrb>
              <svg width="22" height="24" viewBox="0 0 22 24"><circle cx="10" cy="13" r="9.500" fill="#ef9a2e" /><circle cx="18" cy="4" r="3" fill="#d8402c" /><path d="M7 20a3 3 0 0 1 0-6 4 4 0 0 1 8-.5 3.200 3.200 0 0 1 0 6.500z" fill="#cfe0ee" /></svg>
            </WeatherOrb>
            21°C&nbsp; Mayorm. soleado
          </Weather>
          <TrayIcon><ChevronUp size={18} strokeWidth={1.5} /></TrayIcon>
          <TrayIcon><FaCloud size={18} color="#ddd" /></TrayIcon>
          <TrayIcon><Monitor size={17} strokeWidth={1.3} /></TrayIcon>
          <TrayIcon><Volume2 size={17} strokeWidth={1.3} /></TrayIcon>
          <TrayIcon $w={34}>ESP</TrayIcon>
          <ClockBox>14:21<br />10/5/2023</ClockBox>
          <TrayIcon $w={34}><MessageSquareMore size={20} fill="#eee" color="#333" strokeWidth={1} /><Badge $r={3} $b={5} $bg="#272727" $ring>7</Badge></TrayIcon>
          <DesktopEdge />
        </TrayRight>
      </Taskbar>
    </Screen>
  );
}
